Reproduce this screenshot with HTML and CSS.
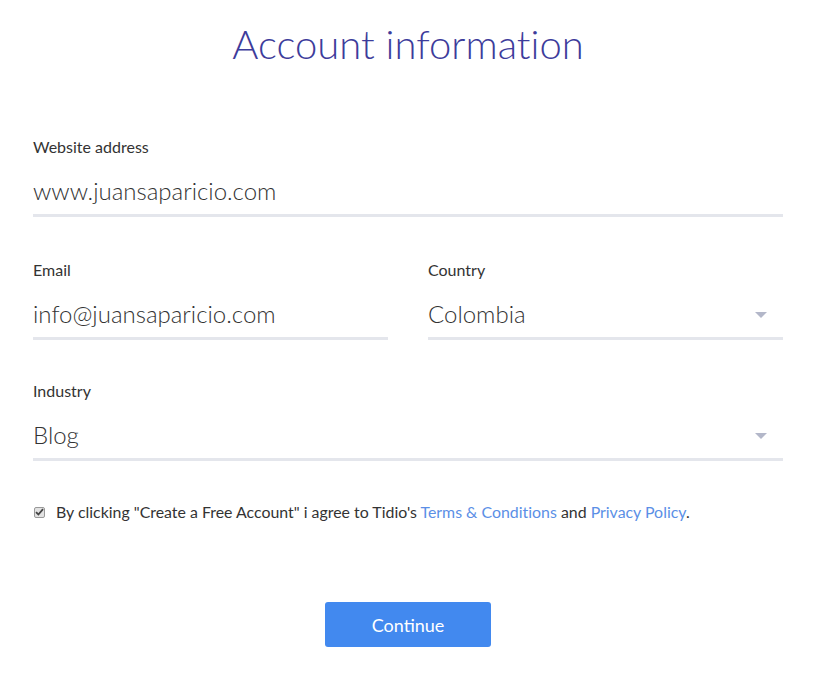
FILE: index.html
```html
<!DOCTYPE html>
<html>
<head>
<meta charset="utf-8">
<link rel="stylesheet" href="styles.css">
</head>
<body>
<div class="page">
  <h1 class="title">Account information</h1>
  <div class="form">
    <div class="field field-first">
      <div class="label">Website address</div>
      <div class="value">www.juansaparicio.com</div>
    </div>
    <div class="row">
      <div class="field">
        <div class="label">Email</div>
        <div class="value">info@juansaparicio.com</div>
      </div>
      <div class="field">
        <div class="label">Country</div>
        <div class="value select">Colombia<span class="arrow"></span></div>
      </div>
    </div>
    <div class="field field-industry">
      <div class="label">Industry</div>
      <div class="value select">Blog<span class="arrow"></span></div>
    </div>
    <div class="agree">
      <span class="check"><svg width="9" height="8" viewBox="0 0 9 8"><path d="M1 4.2 L3.4 6.5 L8 1.2" fill="none" stroke="#444" stroke-width="1.8"/></svg></span>
      <span>By clicking "Create a Free Account" i agree to Tidio's <a class="link">Terms &amp; Conditions</a> and <a class="link">Privacy Policy</a>.</span>
    </div>
    <div class="actions">
      <button class="btn">Continue</button>
    </div>
  </div>
</div>
</body>
</html>
```
FILE: styles.css
```css
html, body {
  margin: 0;
  padding: 0;
  background: #fff;
}
body {
  font-family: Lato, "Open Sans", sans-serif;
  color: #333;
  font-variant-ligatures: none;
}
.page {
  width: 750px;
  padding: 19px 0 0 33px;
}
.title {
  margin: 0;
  text-align: center;
  font-weight: 300;
  font-size: 40px;
  line-height: 50px;
  color: #3d3c9b;
}
.form {
  margin-top: 68px;
  display: flex;
  flex-direction: column;
}
.row {
  display: flex;
  gap: 40px;
  margin-top: 43px;
}
.row .field {
  flex: 1;
}
.field-industry {
  margin-top: 41px;
}
.label {
  font-size: 16px;
  line-height: 20px;
  color: #333;
}
.value {
  margin-top: 13px;
  height: 42px;
  padding-bottom: 2px;
  line-height: 42px;
  font-size: 24px;
  font-weight: 300;
  color: #333;
  border-bottom: 3px solid #e4e6ec;
  position: relative;
}
.arrow {
  position: absolute;
  right: 16px;
  top: 19px;
  width: 0;
  height: 0;
  border-left: 6px solid transparent;
  border-right: 6px solid transparent;
  border-top: 6px solid #b3b7c9;
}
.agree {
  margin-top: 41px;
  display: flex;
  align-items: center;
  gap: 11px;
  font-size: 15.9px;
  line-height: 20px;
  color: #333;
  padding-left: 1px;
}
.check {
  width: 9px;
  height: 9px;
  border: 1px solid #999;
  border-radius: 2px;
  background: #e2e2e2;
  display: flex;
  align-items: center;
  justify-content: center;
}
.link {
  color: #5b8fe6;
  text-decoration: none;
}
.actions {
  margin-top: 80px;
  display: flex;
  justify-content: center;
}
.btn {
  width: 166px;
  height: 45px;
  border: none;
  border-radius: 3px;
  background: #4289ef;
  color: #fff;
  font-family: Lato, sans-serif;
  font-size: 18px;
}
```
